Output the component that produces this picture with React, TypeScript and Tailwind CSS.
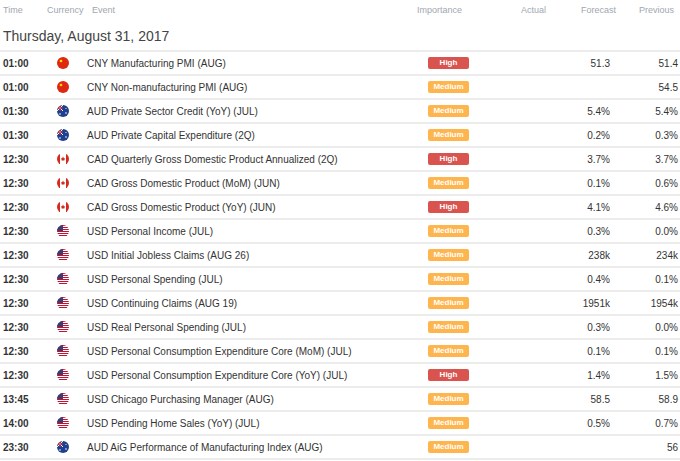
const rows: [string,string,string,string,string,string][] = [
["01:00","cn","CNY Manufacturing PMI (AUG)","High","51.3","51.4"],
["01:00","cn","CNY Non-manufacturing PMI (AUG)","Medium","","54.5"],
["01:30","au","AUD Private Sector Credit (YoY) (JUL)","Medium","5.4%","5.4%"],
["01:30","au","AUD Private Capital Expenditure (2Q)","Medium","0.2%","0.3%"],
["12:30","ca","CAD Quarterly Gross Domestic Product Annualized (2Q)","High","3.7%","3.7%"],
["12:30","ca","CAD Gross Domestic Product (MoM) (JUN)","Medium","0.1%","0.6%"],
["12:30","ca","CAD Gross Domestic Product (YoY) (JUN)","High","4.1%","4.6%"],
["12:30","us","USD Personal Income (JUL)","Medium","0.3%","0.0%"],
["12:30","us","USD Initial Jobless Claims (AUG 26)","Medium","238k","234k"],
["12:30","us","USD Personal Spending (JUL)","Medium","0.4%","0.1%"],
["12:30","us","USD Continuing Claims (AUG 19)","Medium","1951k","1954k"],
["12:30","us","USD Real Personal Spending (JUL)","Medium","0.3%","0.0%"],
["12:30","us","USD Personal Consumption Expenditure Core (MoM) (JUL)","Medium","0.1%","0.1%"],
["12:30","us","USD Personal Consumption Expenditure Core (YoY) (JUL)","High","1.4%","1.5%"],
["13:45","us","USD Chicago Purchasing Manager (AUG)","Medium","58.5","58.9"],
["14:00","us","USD Pending Home Sales (YoY) (JUL)","Medium","0.5%","0.7%"],
["23:30","au","AUD AiG Performance of Manufacturing Index (AUG)","Medium","","56"],
];

function Flag({c}:{c:string}){
  return <svg width="12" height="12" viewBox="0 0 12 12">
    <defs><clipPath id={"cp"+c}><circle cx="6" cy="6" r="6"/></clipPath></defs>
    <g clipPath={`url(#cp${c})`}>
    {c==="cn"&&<><rect width="12" height="12" fill="#de2910"/><circle cx="4" cy="4" r="1.3" fill="#ffde00"/></>}
    {c==="au"&&<><rect width="12" height="12" fill="#1f3f8f"/><path d="M0 0L6 6M6 0L0 6" stroke="#fff" strokeWidth="1"/><path d="M3 0V6M0 3H6" stroke="#d33" strokeWidth="1"/><circle cx="9" cy="8" r="0.8" fill="#fff"/><circle cx="3" cy="9" r="0.8" fill="#fff"/><circle cx="9" cy="3.5" r="0.6" fill="#fff"/></>}
    {c==="ca"&&<><rect width="12" height="12" fill="#fff"/><rect width="3" height="12" fill="#d52b1e"/><rect x="9" width="3" height="12" fill="#d52b1e"/><path d="M6 3.5L7 5.5L8 5L7.3 7.5H4.7L4 5L5 5.5Z" fill="#d52b1e"/></>}
    {c==="us"&&<><rect width="12" height="12" fill="#fff"/>{[0,2,4,6,8,10].map(y=><rect key={y} y={y} width="12" height="1" fill="#c8102e"/>)}<rect width="6" height="6" fill="#3c3b6e"/></>}
    </g>
  </svg>;
}

export default function App(){
  return <div className="w-[680px] h-[461px] bg-white overflow-hidden" style={{fontFamily:'"Liberation Sans", Arial, sans-serif'}}>
    <div className="flex h-[22px] items-center text-[9px] text-[#a0a7b0]">
      <div className="w-[47px] pl-[3px]">Time</div>
      <div className="w-[45px]">Currency</div>
      <div className="w-[325px]">Event</div>
      <div className="w-[80px]">Importance</div>
      <div className="w-[49px] text-right">Actual</div>
      <div className="w-[70px] text-right">Forecast</div>
      <div className="w-[58px] text-right">Previous</div>
    </div>
    <div className="h-[28px] flex items-center pl-[3px] text-[14px] text-[#444]">Thursday, August 31, 2017</div>
    <div className="border-t-2 border-[#ececec]">
      {rows.map((r,i)=><div key={i} className="flex h-[24px] items-center border-b-2 border-[#ececec] text-[10px] text-[#333]">
        <div className="w-[57px] pl-[3px] font-bold">{r[0]}</div>
        <div className="w-[30px] flex"><Flag c={r[1]}/></div>
        <div className="w-[341px]">{r[2]}</div>
        <span className={`w-[41px] h-[12px] rounded-[2px] flex items-center justify-center text-white text-[8px] font-bold ${r[3]==="High"?"bg-[#d9534f]":"bg-[#ffb54d]"}`}>{r[3]}</span>
        <div className="w-[143px] text-right pr-[2px]">{r[4]}</div>
        <div className="w-[66px] text-right">{r[5]}</div>
      </div>)}
    </div>
  </div>;
}
